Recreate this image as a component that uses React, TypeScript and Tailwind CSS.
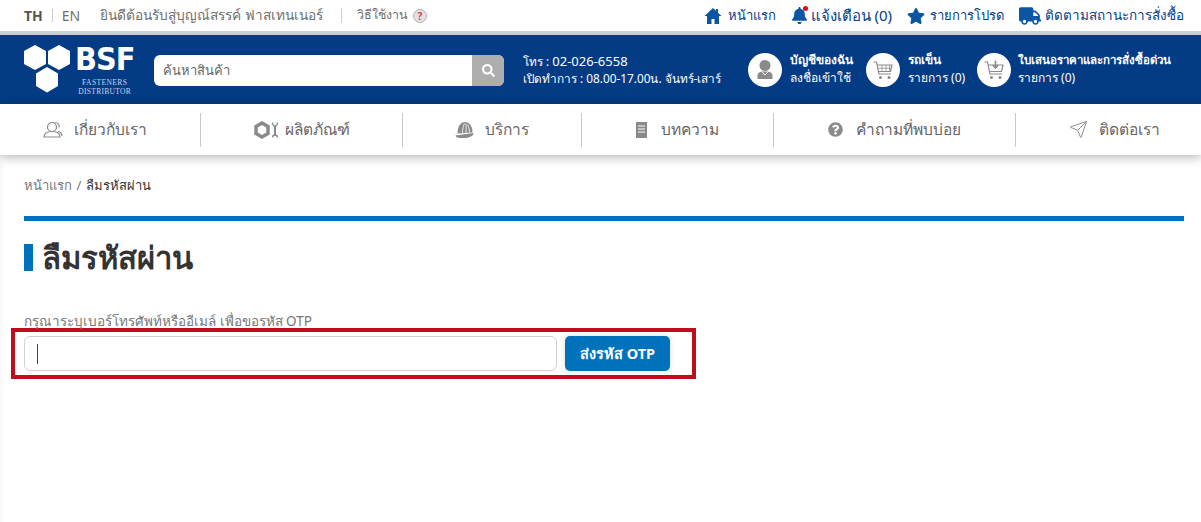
import { Send } from "lucide-react";
import { FaStar, FaTruck, FaBell, FaSearch, FaQuestionCircle } from "react-icons/fa";

const font = { fontFamily: '"Noto Sans", "Liberation Sans", sans-serif' };

function Logo() {
  return (
    <div className="flex w-[110px] shrink-0 items-start">
      <svg width="50" height="50" viewBox="0 0 50 50" className="mt-[2px] shrink-0" fill="#fff">
        <polygon points="12,0 23,6 23,19 12,25 1,19 1,6" />
        <polygon points="36,0 47,6 47,19 36,25 25,19 25,6" />
        <polygon points="24,22 35,28.500 35,41 24,47.500 13,41 13,28.500" />
      </svg>
      <div className="ml-[2px] flex flex-col items-center text-white">
        <span className="text-[32px] leading-[33px] font-bold tracking-[-1px]" style={{ fontFamily: '"DejaVu Sans Condensed", "Liberation Sans", sans-serif' }}>BSF</span>
        <span className="mt-[2px] text-[7.500px] leading-[9px] tracking-[0.4px] text-[#c9d6ea]" style={{ fontFamily: '"Liberation Serif", serif' }}>FASTENERS</span>
        <span className="text-[7.500px] leading-[9px] tracking-[0.3px] whitespace-nowrap text-[#c9d6ea]" style={{ fontFamily: '"Liberation Serif", serif' }}>DISTRIBUTOR</span>
      </div>
    </div>
  );
}

function CartIcon({ arrow }: { arrow?: boolean }) {
  return (
    <svg width="22" height="22" viewBox="0 0 22 22" fill="none" stroke="#8a8a8a" strokeWidth="1.200">
      <path d="M1.500 3h3l2.500 12h12" />
      <path d="M5 6h15l-1.500 6.500H6.300" />
      {!arrow && <path d="M6 9.200h13M10 6v6.500M14 6v6.500M17.500 6v6.500" strokeWidth="0.800" />}
      {arrow && <path d="M12.500 1.500v7M9.800 6l2.700 3 2.700-3" strokeWidth="1.600" />}
      <circle cx="8.500" cy="18.500" r="1.500" fill="#8a8a8a" stroke="none" />
      <circle cx="17" cy="18.500" r="1.500" fill="#8a8a8a" stroke="none" />
    </svg>
  );
}

function HeadAction({ icon, title, sub, className, titleSize }: { icon: React.ReactNode; title: string; sub: string; className: string; titleSize: string }) {
  return (
    <div className={`flex items-center ${className}`}>
      <span className="flex h-[34px] w-[34px] shrink-0 items-center justify-center rounded-full bg-white">{icon}</span>
      <div className="-mt-[3px] flex flex-col gap-[1px]">
        <span className={`leading-[17px] font-bold whitespace-nowrap text-white ${titleSize}`}>{title}</span>
        <span className="text-[12px] leading-[17px] whitespace-nowrap text-white">{sub}</span>
      </div>
    </div>
  );
}

function NavItem({ icon, label, className }: { icon: React.ReactNode; label: string; className: string }) {
  return (
    <div className={`flex h-[34px] items-center justify-center border-r border-[#c8c8c8] text-[15.500px] text-[#666666] ${className}`}>
      <span className="flex items-center text-[#8a8a8a]">{icon}</span>
      <span className="whitespace-nowrap">{label}</span>
    </div>
  );
}

export default function App() {
  return (
    <div className="min-h-[522px] bg-white" style={font}>
      <div className="flex h-[31px] items-center justify-between pr-[17px] pl-[24px] text-[13.700px] text-[#6f6f6f]">
        <div className="flex items-center">
          <span className="text-[14px] font-bold text-[#555555]">TH</span>
          <span className="mx-[9px] h-[13px] w-px bg-[#cccccc]" />
          <span className="text-[14px]">EN</span>
          <span className="ml-[20px]">ยินดีต้อนรับสู่บุญณ์สรรค์ ฟาสเทนเนอร์</span>
          <span className="mr-[15px] ml-[18px] h-[15px] w-px bg-[#cccccc]" />
          <span className="text-[12.500px]">วิธีใช้งาน</span>
          <span className="ml-[5px] flex h-[14px] w-[14px] items-center justify-center rounded-full border border-[#b5b5b5] bg-[#e4dfe0] text-[10px] leading-none font-bold text-[#c0504d]">?</span>
        </div>
        <div className="flex items-center gap-[15px] text-[13px] text-[#054087]">
          <span className="flex items-center gap-[6px]">
            <svg width="18" height="18" viewBox="0 0 18 18" fill="#0b56a4"><path d="M9 1 .5 9H3v8h4.500v-5h3v5H15V9h2.500L14 5.700V2h-2v1.800z" /></svg>
            หน้าแรก
          </span>
          <span className="relative flex items-center gap-[3px] text-[15px]">
            <FaBell size={17} className="text-[#0b56a4]" />
            <span className="absolute top-[2px] left-[12px] h-[5px] w-[5px] rounded-full bg-[#e60012]" />
            แจ้งเตือน (0)
          </span>
          <span className="flex items-center gap-[5px]"><FaStar size={18} className="text-[#0b56a4]" />รายการโปรด</span>
          <span className="flex items-center gap-[4px] text-[13.500px]"><FaTruck size={22} className="text-[#0b56a4]" />ติดตามสถานะการสั่งซื้อ</span>
        </div>
      </div>
      <div className="h-[4px] bg-[#cfcfcf]" />
      <div className="flex h-[69px] items-center bg-[#043b85] pl-[23px] text-white">
        <Logo />
        <div className="mt-[2px] ml-[21px] flex h-[31px] w-[350px] shrink-0 overflow-hidden rounded-[6px] bg-white">
          <span className="flex flex-1 items-center pl-[9px] text-[13px] text-[#666666]">ค้นหาสินค้า</span>
          <span className="flex w-[32px] items-center justify-center bg-[#aeaeae]"><FaSearch size={13} className="text-white" /></span>
        </div>
        <div className="ml-[19px] w-[225px] shrink-0 text-[11.800px] leading-[17px] whitespace-nowrap">
          <div><span>โทร : </span><span className="text-[13px]">02-026-6558</span></div>
          <div>เปิดทำการ : 08.00-17.00น. จันทร์-เสาร์</div>
        </div>
        <HeadAction
          className="w-[118px] gap-[8px]"
          titleSize="text-[12px]"
          icon={<svg width="18" height="21" viewBox="0 0 18 21"><circle cx="9" cy="6.500" r="5.500" fill="#8a8a8a" /><path d="M1.500 20v-3.500C1.500 14 4 13 6 12.500h6c2 .5 4.500 1.500 4.500 4V20z" fill="#8a8a8a" /><path d="M6 12.800 9 16l3-3.200" fill="none" stroke="#fff" strokeWidth="1" /></svg>}
          title="บัญชีของฉัน"
          sub="ลงชื่อเข้าใช้"
        />
        <HeadAction className="w-[111px] gap-[8px]" titleSize="text-[12px]" icon={<CartIcon />} title="รถเข็น" sub="รายการ (0)" />
        <HeadAction className="w-[190px] gap-[7px]" titleSize="text-[11.500px]" icon={<CartIcon arrow />} title="ใบเสนอราคาและการสั่งซื้อด่วน" sub="รายการ (0)" />
      </div>
      <div className="relative z-10 flex h-[51px] items-center bg-white shadow-[0_2px_10px_rgba(0,0,0,0.3)]">
        <NavItem className="w-[201px] gap-[11px] pr-[10px]" icon={<svg width="20" height="18" viewBox="0 0 20 18" fill="none" stroke="#8a8a8a" strokeWidth="1.200"><circle cx="9" cy="6" r="4.500" /><path d="M1 16c0-4 3-5.500 8-5.500s8 1.500 8 5.500zM12 1.500c2.500 0 5 2 4 5M15 10.500c2 .5 4 2 4 4.500" /></svg>} label="เกี่ยวกับเรา" />
        <NavItem className="w-[202px] gap-[6px]" icon={<svg width="25" height="18" viewBox="0 0 25 18" fill="none" stroke="#8a8a8a"><polygon points="8,2 14,5.500 14,12.500 8,16 2,12.500 2,5.500" strokeWidth="3.500" /><path d="M21 5v9" strokeWidth="2" /><path d="M18.500 1.500c0 3 1 3.500 2.500 3.500s2.500-.5 2.500-3.500M18.500 16.500c0-2 1-2.500 2.500-2.500s2.500.5 2.500 2.500" strokeWidth="1.300" /></svg>} label="ผลิตภัณฑ์" />
        <NavItem className="w-[179px] gap-[11px]" icon={<svg width="19" height="18" viewBox="0 0 19 18" fill="#8a8a8a"><path d="M2.500 12.500C2.500 5.500 5.500 1 10 1s7.500 4.500 7.500 10.500z" /><path d="M.5 14.500 18.500 12c.2 2-2 4-7 5H5c-2.500 0-4.500-1-4.500-2.500z" /><path d="M7.500 12c0-4 .8-7.500 2-9.500M11 12c.3-4 .2-7-.2-9.500M14.500 11.500c0-3.500-.8-6-2-8" fill="none" stroke="#fff" strokeWidth=".8" /></svg>} label="บริการ" />
        <NavItem className="w-[192px] gap-[14px]" icon={<svg width="11" height="16" viewBox="0 0 11 16"><rect width="11" height="16" fill="#8a8a8a" /><path d="M2 4h7M2 7h7M2 10h7" stroke="#fff" strokeWidth="1" /></svg>} label="บทความ" />
        <NavItem className="w-[242px] gap-[13px]" icon={<FaQuestionCircle size={15} />} label="คำถามที่พบบ่อย" />
        <div className="flex h-[34px] flex-1 items-center justify-center gap-[11px] pl-[11px] text-[15.500px] text-[#666666]">
          <Send size={19} strokeWidth={1.200} className="text-[#8a8a8a]" />
          <span className="whitespace-nowrap">ติดต่อเรา</span>
        </div>
      </div>
      <div className="min-h-[367px] border-l-[3px] border-[#f9f9f9]">
        <div className="pr-[17px] pl-[21px]">
          <div className="pt-[20px] text-[13px] leading-[20px] text-[#777777]">
            หน้าแรก <span className="mx-[1px]">/</span> <span className="text-[#333333]">ลืมรหัสผ่าน</span>
          </div>
          <div className="mt-[21px] h-[5px] bg-[#0072bc]" />
          <div className="mt-[18px] flex h-[36px] items-center">
            <span className="h-[27px] w-[9px] bg-[#0072bc]" />
            <h1 className="ml-[9px] text-[31px] leading-[36px] font-semibold text-[#333333]">ลืมรหัสผ่าน</h1>
          </div>
          <div className="mt-[36px] text-[13.500px] leading-[20px] text-[#777777]">กรุณาระบุเบอร์โทรศัพท์หรืออีเมล์ เพื่อขอรหัส OTP</div>
        </div>
        <div className="mt-[-3px] ml-[8px] flex h-[51px] w-[685px] items-center border-[4px] border-[#c00d1e] pl-[9px]">
          <div className="flex h-[35px] w-[533px] items-center rounded-[6px] border border-[#d0d0d0] pl-[12px]">
            <span className="h-[20px] w-px bg-[#444444]" />
          </div>
          <button className="ml-[8px] h-[35px] w-[105px] rounded-[5px] bg-[#0072bc] text-[14.500px] font-bold text-white shadow-[0_0_6px_rgba(0,0,0,0.15)]">ส่งรหัส OTP</button>
        </div>
      </div>
    </div>
  );
}
